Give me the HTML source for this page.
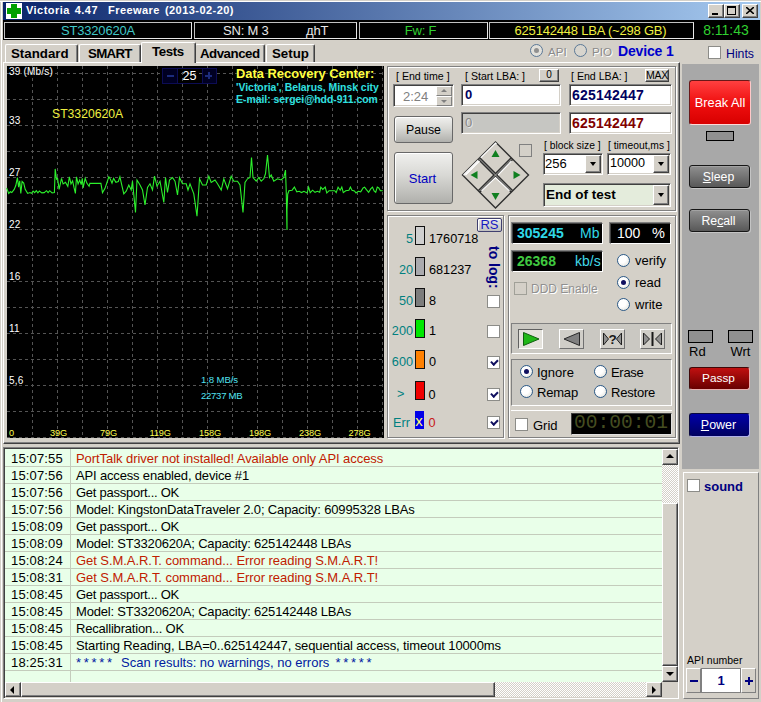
<!DOCTYPE html>
<html><head><meta charset="utf-8"><title>Victoria 4.47</title>
<style>
html,body{margin:0;padding:0}
body{width:761px;height:702px;overflow:hidden;position:relative;background:#d4d0c8;font-family:"Liberation Sans",sans-serif;font-size:13px;color:#000}
div,span{position:absolute;box-sizing:border-box;white-space:pre;line-height:1}
.t{line-height:1}
.sunk{border:1px solid;border-color:#808080 #fff #fff #808080;box-shadow:inset 1px 1px 0 #404040, inset -1px -1px 0 #d4d0c8}
.btn{background:#d4d0c8;border:1px solid;border-color:#fff #404040 #404040 #fff;box-shadow:inset -1px -1px 0 #808080, inset 1px 1px 0 #d4d0c8;text-align:center}
.sp{background:#000;border:1px solid;border-color:#c0c0c0 #e8e8e8 #e8e8e8 #c0c0c0;text-align:center;font-size:13px;letter-spacing:-.2px}
.grp{border:1px solid;border-color:#808080 #fff #fff #808080;box-shadow:inset 1px 1px 0 #fff, 1px 1px 0 #fff inset}
.etch{border:1px solid #808080;box-shadow:1px 1px 0 #fff, inset 1px 1px 0 #fff}
.radio{width:13px;height:13px;border-radius:50%;border:1px solid #2c5a88;background:radial-gradient(circle at 35% 35%,#fff 0,#fff 40%,#dcdcd4 100%)}
.radio.on::after{content:"";position:absolute;left:3px;top:3px;width:5px;height:5px;border-radius:50%;background:#101060}
.chk{width:13px;height:13px;border:1px solid #8c8c88;background:#fff}
.lab{font-size:10.6px}
.lcd{background:#000;border:1px solid;border-color:#404040 #fff #fff #404040;box-shadow:-1px -1px 0 #808080}
</style></head><body>
<!-- window frame -->
<div style="left:0;top:1px;width:761px;height:1px;background:#fff"></div>
<div style="left:1px;top:1px;width:1px;height:701px;background:#fff"></div>
<!-- title bar -->
<div style="left:3px;top:2px;width:757px;height:18px;background:linear-gradient(90deg,#0a246a 0%,#a6caf0 100%)"></div>
<div style="left:6px;top:3px;width:16px;height:16px;background:#fff"></div>
<div style="left:11px;top:4px;width:6px;height:14px;background:#00a000"></div>
<div style="left:7px;top:8px;width:14px;height:6px;background:#00a000"></div>
<div class="t" style="left:26px;top:5px;color:#fff;font-weight:bold;font-size:11px;letter-spacing:.45px;word-spacing:1.5px">Victoria 4.47  Freeware (2013-02-20)</div>
<div class="btn" style="left:708px;top:4px;width:16px;height:14px"><div style="left:3px;top:8px;width:6px;height:2px;background:#000"></div></div>
<div class="btn" style="left:724px;top:4px;width:16px;height:14px"><div style="left:2px;top:1px;width:9px;height:9px;border:1px solid #000;border-top-width:2px"></div></div>
<div class="btn" style="left:742px;top:4px;width:16px;height:14px"><svg style="position:absolute;left:3px;top:2px" width="8" height="7"><path d="M0 0L8 7M8 0L0 7" stroke="#000" stroke-width="1.6"/></svg></div>
<!-- status panels -->
<div style="left:3px;top:20px;width:757px;height:20px;background:#000"></div>
<div class="sp" style="left:4px;top:22px;width:188px;height:17px;color:#40c8c8"><span class="t" style="left:0;width:100%;top:1px">ST3320620A</span></div>
<div class="sp" style="left:194px;top:22px;width:163px;height:17px;color:#e8e8e8"><span class="t" style="left:28px;top:1px">SN: M 3</span><span class="t" style="left:111px;top:1px">дhT</span></div>
<div class="sp" style="left:359px;top:22px;width:129px;height:17px;color:#30d030"><span class="t" style="left:-3px;width:100%;top:1px">Fw: F</span></div>
<div class="sp" style="left:489px;top:22px;width:205px;height:17px;color:#f0f040"><span class="t" style="left:-1px;width:100%;top:1px">625142448 LBA (~298 GB)</span></div>
<div class="sp" style="left:694px;top:22px;width:66px;height:17px;border-color:#000;color:#30d030"><span class="t" style="left:-1px;width:100%;top:0px;font-size:14px;letter-spacing:0">8:11:43</span></div>
<!-- tabs -->
<div id="tabs">
<div class="tab" style="left:5px;top:44px;width:73px;height:19px"><span class="t" style="left:5px;top:2px">Standard</span></div>
<div class="tab" style="left:79px;top:44px;width:62px;height:19px"><span class="t" style="left:8px;top:2px;letter-spacing:-.7px">SMART</span></div>
<div class="tab" style="left:195px;top:44px;width:70px;height:19px"><span class="t" style="left:4px;top:2px;letter-spacing:-.5px">Advanced</span></div>
<div class="tab" style="left:266px;top:44px;width:49px;height:19px"><span class="t" style="left:5px;top:2px">Setup</span></div>
</div>
<style>
.tab{border:1px solid;border-color:#fff #404040 transparent #fff;border-bottom:0;box-shadow:inset -1px 0 0 #808080;font-weight:bold;font-size:13.3px;border-radius:2px 2px 0 0}
</style>
<!-- tab page -->
<div style="left:3px;top:62px;width:677px;height:382px;border:1px solid;border-color:#fff #404040 #404040 #fff;box-shadow:inset -1px -1px 0 #808080"></div>
<div class="tab" style="left:141px;top:42px;width:55px;height:21px;background:#d4d0c8"><span class="t" style="left:10px;top:2px;letter-spacing:-.4px">Tests</span></div>
<!-- right of tabs -->
<div class="radio" style="left:530px;top:44px;border-color:#5a7896;background:#e2e0da"><div style="left:3px;top:3px;width:5px;height:5px;border-radius:50%;background:#909090"></div></div>
<div class="t" style="left:548px;top:46px;color:#8a8a8a;text-shadow:1px 1px 0 #fff;font-size:11.6px">API</div>
<div class="radio" style="left:574px;top:44px;border-color:#5a7896;background:#d8d5ce"></div>
<div class="t" style="left:592px;top:46px;color:#8a8a8a;text-shadow:1px 1px 0 #fff;font-size:11.6px">PIO</div>
<div class="t" style="left:618px;top:44px;color:#0000cc;font-weight:bold;font-size:14px;letter-spacing:-.15px">Device 1</div>
<div class="chk" style="left:708px;top:46px"></div>
<div class="t" style="left:726px;top:48px;color:#000080;font-size:12.3px">Hints</div>
<!-- chart -->
<div style="left:7px;top:66px;width:377px;height:372px;background:#000"></div>
<svg style="position:absolute;left:0;top:0" width="761" height="702" viewBox="0 0 761 702">
<g stroke="#545454" stroke-width="1" stroke-dasharray="3 3" shape-rendering="crispEdges">
<line x1="32.5" y1="66" x2="32.5" y2="438"/>
<line x1="57.5" y1="66" x2="57.5" y2="438"/>
<line x1="82.5" y1="66" x2="82.5" y2="438"/>
<line x1="107.5" y1="66" x2="107.5" y2="438"/>
<line x1="132.5" y1="66" x2="132.5" y2="438"/>
<line x1="157.5" y1="66" x2="157.5" y2="438"/>
<line x1="182.5" y1="66" x2="182.5" y2="438"/>
<line x1="207.5" y1="66" x2="207.5" y2="438"/>
<line x1="232.5" y1="66" x2="232.5" y2="438"/>
<line x1="257.5" y1="66" x2="257.5" y2="438"/>
<line x1="282.5" y1="66" x2="282.5" y2="438"/>
<line x1="307.5" y1="66" x2="307.5" y2="438"/>
<line x1="332.5" y1="66" x2="332.5" y2="438"/>
<line x1="357.5" y1="66" x2="357.5" y2="438"/>
<line x1="382.5" y1="66" x2="382.5" y2="438"/>
<line x1="7" y1="73.5" x2="384" y2="73.5"/>
<line x1="7" y1="99.5" x2="384" y2="99.5"/>
<line x1="7" y1="125.5" x2="384" y2="125.5"/>
<line x1="7" y1="151.5" x2="384" y2="151.5"/>
<line x1="7" y1="177.5" x2="384" y2="177.5"/>
<line x1="7" y1="203.5" x2="384" y2="203.5"/>
<line x1="7" y1="229.5" x2="384" y2="229.5"/>
<line x1="7" y1="255.5" x2="384" y2="255.5"/>
<line x1="7" y1="281.5" x2="384" y2="281.5"/>
<line x1="7" y1="307.5" x2="384" y2="307.5"/>
<line x1="7" y1="333.5" x2="384" y2="333.5"/>
<line x1="7" y1="359.5" x2="384" y2="359.5"/>
<line x1="7" y1="385.5" x2="384" y2="385.5"/>
<line x1="7" y1="411.5" x2="384" y2="411.5"/>
<line x1="7" y1="437.5" x2="384" y2="437.5"/>
</g>
<polyline fill="none" stroke="#2cf02c" stroke-width="1.1" points="6.6,187.9 8.7,193.4 10.3,191.8 11.8,192.6 14.2,189.4 15.8,185.5 17.4,177.6 18.6,187.1 19.7,180.8 20.8,193.4 22.1,181.5 23.7,183.1 25.2,189.4 27.6,193.4 30.0,192.6 31.5,193.4 33.1,191.0 34.7,192.6 36.3,190.7 37.9,192.9 39.4,191.0 41.8,192.9 44.2,192.6 46.5,190.7 48.1,192.6 49.7,190.7 52.1,192.9 54.4,192.6 55.2,168.9 56.5,179.2 57.6,178.4 59.1,189.4 61.5,178.4 63.1,183.9 65.5,182.3 67.8,186.3 69.4,176.8 71.0,183.9 72.6,180.8 74.1,187.9 75.4,193.4 76.5,176.8 78.1,183.9 79.7,180.0 81.2,184.7 82.3,178.4 83.1,187.9 85.2,178.4 86.8,183.1 89.1,186.3 89.9,183.4 100.9,183.4 102.5,192.6 104.9,188.6 107.3,181.5 108.8,176.8 110.4,179.2 112.0,183.1 113.6,178.4 115.9,182.3 118.3,181.5 119.9,176.8 123.8,193.8 126.2,191.2 128.8,185.0 131.2,190.0 132.5,181.2 135.5,212.5 137.0,180.0 140.0,185.0 142.5,190.0 145.0,205.0 147.5,187.5 150.0,183.8 152.5,190.0 154.5,176.2 157.0,186.2 160.0,181.2 163.8,202.5 165.5,177.5 167.5,192.5 169.5,180.0 172.5,177.5 175.0,181.2 177.5,195.0 179.5,177.5 182.5,183.8 186.2,183.8 188.0,190.0 190.0,183.8 193.8,193.8 197.0,216.2 199.5,178.8 202.5,185.0 206.2,185.0 208.8,176.2 211.2,182.5 215.0,180.0 217.5,183.8 221.2,190.0 223.8,178.8 227.5,188.8 231.2,176.2 233.8,181.2 237.5,181.2 240.0,185.0 243.0,212.5 245.0,182.5 247.5,178.8 250.0,177.5 251.5,157.5 253.0,177.5 256.2,181.2 258.8,177.5 261.2,181.2 263.8,178.8 265.5,173.8 267.5,155.0 269.5,177.5 271.2,175.0 273.8,181.2 277.5,178.8 281.2,180.0 283.8,177.5 285.5,170.0 286.2,190.0 287.0,230.0 287.0,209.9 287.7,194.2 288.9,190.7 292.1,190.2 294.4,187.1 296.8,191.8 299.2,191.3 301.5,192.6 303.9,191.3 307.1,192.9 308.6,187.1 310.2,192.6 312.6,190.2 315.0,192.3 317.3,191.3 319.7,192.3 320.8,187.1 322.8,189.4 325.2,187.1 326.8,192.9 329.1,190.7 334.7,190.7 336.2,192.6 338.1,187.1 340.2,190.2 341.8,187.1 343.3,192.6 345.7,190.7 348.9,190.2 350.4,187.1 352.0,190.2 354.4,191.0 356.0,192.9 358.3,191.3 360.7,191.8 363.1,187.9 364.6,187.1 366.2,189.4 368.6,192.3 370.9,188.6 372.5,187.1 374.1,191.0 375.7,192.3 377.3,187.1 378.8,187.9 380.4,190.7 382.8,190.7"/>
</svg>
<div id="charttext" style="left:0;top:0;color:#fff;font-size:10px;letter-spacing:.2px">
<div class="t" style="left:9px;top:67px">39 (Mb/s)</div>
<div class="t" style="left:9px;top:116px">33</div>
<div class="t" style="left:9px;top:168px">27</div>
<div class="t" style="left:9px;top:220px">22</div>
<div class="t" style="left:9px;top:272px">16</div>
<div class="t" style="left:9px;top:324px">11</div>
<div class="t" style="left:9px;top:376px">5,6</div>
<div class="t" style="left:9px;top:429px;color:#ffff50;letter-spacing:-.15px;font-size:9.2px">0</div>
<div class="t" style="left:50px;top:429px;color:#ffff50;letter-spacing:-.15px;font-size:9.2px">39G</div>
<div class="t" style="left:100px;top:429px;color:#ffff50;letter-spacing:-.15px;font-size:9.2px">79G</div>
<div class="t" style="left:149.5px;top:429px;color:#ffff50;letter-spacing:-.15px;font-size:9.2px">119G</div>
<div class="t" style="left:199px;top:429px;color:#ffff50;letter-spacing:-.15px;font-size:9.2px">158G</div>
<div class="t" style="left:249px;top:429px;color:#ffff50;letter-spacing:-.15px;font-size:9.2px">198G</div>
<div class="t" style="left:299px;top:429px;color:#ffff50;letter-spacing:-.15px;font-size:9.2px">238G</div>
<div class="t" style="left:348.5px;top:429px;color:#ffff50;letter-spacing:-.15px;font-size:9.2px">278G</div>
<div class="t" style="left:52px;top:108px;color:#f0f040;font-size:12.2px;letter-spacing:0">ST3320620A</div>
<div class="t" style="left:201px;top:375px;color:#50e0f0;font-size:9.6px;letter-spacing:-.1px">1,8 MB/s</div>
<div class="t" style="left:201px;top:391px;color:#50e0f0;font-size:9.6px;letter-spacing:-.3px">22737 MB</div>
<div class="t" style="left:236px;top:68px;color:#ffff40;font-weight:bold;font-size:12.9px;letter-spacing:0">Data Recovery Center:</div>
<div class="t" style="left:236px;top:83px;color:#30e0e0;font-weight:bold;font-size:10.4px;letter-spacing:0">'Victoria', Belarus, Minsk city</div>
<div class="t" style="left:236px;top:95px;color:#30e0e0;font-weight:bold;font-size:10.4px;letter-spacing:0">E-mail: sergei@hdd-911.com</div>
</div>
<!-- zoom widget -->
<div style="left:162px;top:68px;width:55px;height:16px;border:1px solid #0c0c54"></div>
<div style="left:163px;top:69px;width:15px;height:14px;background:#000022;border-right:1px solid #0c0c54"></div>
<div style="left:202px;top:69px;width:14px;height:14px;background:#000022;border-left:1px solid #0c0c54"></div>
<div style="left:167px;top:75px;width:7px;height:2px;background:#1c2c7c"></div>
<div style="left:205px;top:75px;width:7px;height:2px;background:#1c2c7c"></div>
<div style="left:208px;top:72px;width:2px;height:7px;background:#1c2c7c"></div>
<div class="t" style="left:182.5px;top:70px;color:#fff;font-size:12.6px;letter-spacing:0">25</div>
<!-- group 1 : controls -->
<div class="etch" style="left:387px;top:66px;width:289px;height:145px"></div>
<div class="t lab" style="left:396px;top:71px">[ End time ]</div>
<div class="sunk" style="left:393px;top:84px;width:61px;height:23px;background:#fff"><span class="t" style="left:9px;top:5px;color:#808080;font-size:13px">2:24</span>
<div class="btn" style="left:42px;top:1px;width:16px;height:10px;box-shadow:none;border-color:#fff #808080 #808080 #fff"><div style="left:4px;top:2px;border:3px solid transparent;border-top:0;border-bottom:3px solid #808080"></div></div>
<div class="btn" style="left:42px;top:11px;width:16px;height:10px;box-shadow:none;border-color:#fff #808080 #808080 #fff"><div style="left:4px;top:3px;border:3px solid transparent;border-bottom:0;border-top:3px solid #808080"></div></div>
</div>
<div class="t lab" style="left:465px;top:71px">[ Start LBA: ]</div>
<div class="btn" style="left:539px;top:69px;width:20px;height:13px;font-size:10px"><span class="t" style="left:0;width:100%;top:0">0</span></div>
<div class="sunk" style="left:461px;top:84px;width:100px;height:22px;background:#fff"><span class="t" style="left:3px;top:3px;color:#000060;font-weight:bold;font-size:13px">0</span></div>
<div class="t lab" style="left:571px;top:71px">[ End LBA: ]</div>
<div class="btn" style="left:645px;top:69px;width:24px;height:13px;font-size:10.5px;letter-spacing:-.3px"><span class="t" style="left:0;width:100%;top:0">MAX</span></div>
<div class="sunk" style="left:569px;top:84px;width:103px;height:22px;background:#fff"><span class="t" style="left:2px;top:3px;color:#000060;font-weight:bold;font-size:14px;letter-spacing:.2px">625142447</span></div>
<div class="b2" style="left:394px;top:116px;width:59px;height:27px"><span class="t" style="left:0;width:100%;top:7px;font-size:12.3px">Pause</span></div>
<div class="sunk" style="left:461px;top:112px;width:100px;height:22px;background:#c6c6c2"><span class="t" style="left:3px;top:3px;color:#888;font-size:13px;text-shadow:1px 1px 0 #e8e8e8">0</span></div>
<div class="sunk" style="left:569px;top:112px;width:103px;height:22px;background:#fff"><span class="t" style="left:2px;top:3px;color:#800000;font-weight:bold;font-size:14px;letter-spacing:.2px">625142447</span></div>
<div class="b2" style="left:394px;top:152px;width:59px;height:52px"><span class="t" style="left:-1px;width:100%;top:19px;font-size:13px;color:#0000c0">Start</span></div>
<style>.b2{text-align:center;border:1px solid #686868;border-radius:3px;background:linear-gradient(#f0f0ee,#d8d8d4 45%,#b0b0ac);box-shadow:inset 1px 1px 0 #fff}</style>
<!-- diamond -->
<svg style="position:absolute;left:460px;top:140px" width="72" height="72" viewBox="0 0 72 72">
<g transform="translate(35.5,35)">
<path d="M0 -33L33 0L0 33L-33 0Z" fill="#d4d0c8" stroke="#303030" stroke-width="1.4"/>
<path d="M-32 0L0 -32L1 -31" fill="none" stroke="#fff" stroke-width="1.2"/>
<path d="M-16.5 -16.5L16.5 16.5M16.5 -16.5L-16.5 16.5" stroke="#303030" stroke-width="3.6"/>
<path d="M-16 -16L16 16M16 -16L-16 16" stroke="#a8a8a4" stroke-width="1"/>
<path d="M-14 16L0 2.5L14 16 M2.5 0L16 -14 M-30 0 L-16 -14" fill="none" stroke="#fff" stroke-width="1.2" transform="translate(0,0)"/>
<path d="M0 -25L4 -18L-4 -18Z" fill="#108020"/>
<path d="M0 25L4 18L-4 18Z" fill="#108020"/>
<path d="M-25 0L-18 -4L-18 4Z" fill="#108020"/>
<path d="M25 0L18 -4L18 4Z" fill="#108020"/>
</g></svg>
<div style="left:519px;top:144px;width:13px;height:13px;border:1px solid #808080;background:#d4d0c8"></div>
<div class="t lab" style="left:544px;top:141px;font-size:10.3px">[ block size ]</div>
<div class="t lab" style="left:608px;top:141px;font-size:10.3px">[ timeout,ms ]</div>
<div class="sunk" style="left:543px;top:153px;width:60px;height:22px;background:#fff"><span class="t" style="left:1px;top:3px;font-size:13px">256</span>
<div class="btn" style="left:41px;top:1px;width:16px;height:18px"><div style="left:4px;top:6px;border:3px solid transparent;border-bottom:0;border-top:4px solid #000"></div></div></div>
<div class="sunk" style="left:607px;top:153px;width:64px;height:22px;background:#fff"><span class="t" style="left:2px;top:3px;font-size:12.6px">10000</span>
<div class="btn" style="left:45px;top:1px;width:16px;height:18px"><div style="left:4px;top:6px;border:3px solid transparent;border-bottom:0;border-top:4px solid #000"></div></div></div>
<div class="sunk" style="left:543px;top:183px;width:128px;height:24px;background:#e4ecdc"><span class="t" style="left:2px;top:4px;font-size:13.5px;font-weight:bold">End of test</span>
<div class="btn" style="left:109px;top:1px;width:16px;height:20px"><div style="left:4px;top:7px;border:3px solid transparent;border-bottom:0;border-top:4px solid #000"></div></div></div>
<!-- group 2 : legend -->
<div class="etch" style="left:387px;top:215px;width:117px;height:223px"></div>
<div style="left:477px;top:218px;width:25px;height:14px;border:1px solid #404070;border-radius:2px;background:linear-gradient(#e8e8e8,#c0c0c0);box-shadow:inset 1px 1px 0 #fff;text-align:center"><span class="t" style="left:0;width:100%;top:-1px;font-size:13px;color:#1818c0">RS</span></div>
<div id="legend" style="left:0;top:0;font-size:12.7px">
<div class="t" style="left:380px;width:33px;text-align:right;top:233px;color:#008080">5</div>
<div class="t" style="left:380px;width:33px;text-align:right;top:264px;color:#008080">20</div>
<div class="t" style="left:380px;width:33px;text-align:right;top:295px;color:#008080">50</div>
<div class="t" style="left:380px;width:33px;text-align:right;top:325px;color:#008080">200</div>
<div class="t" style="left:380px;width:33px;text-align:right;top:356px;color:#008080">600</div>
<div class="t" style="left:380px;width:24.5px;text-align:right;top:388px;color:#008080">&gt;</div>
<div class="t" style="left:380px;width:30px;text-align:right;top:417px;color:#008080">Err</div>
<div style="left:415px;top:226px;width:10px;height:19px;background:#d0d0d0;border:1px solid #101010"></div>
<div style="left:415px;top:257px;width:10px;height:19px;background:#aaaaae;border:1px solid #101010"></div>
<div style="left:415px;top:288px;width:10px;height:19px;background:#7c7c7c;border:1px solid #101010"></div>
<div style="left:415px;top:319px;width:10px;height:19px;background:#00e800;border:1px solid #101010"></div>
<div style="left:415px;top:350px;width:10px;height:19px;background:#ff8000;border:1px solid #101010"></div>
<div style="left:415px;top:381px;width:10px;height:19px;background:#f00000;border:1px solid #101010"></div>
<div style="left:415px;top:411px;width:9px;height:18px;background:#0000e8"></div>
<div class="t" style="left:413.5px;top:413px;width:11px;text-align:center;color:#ffff70;font-size:15px">x</div>
<div class="t" style="left:429px;top:233px">1760718</div>
<div class="t" style="left:429px;top:264px">681237</div>
<div class="t" style="left:429px;top:295px">8</div>
<div class="t" style="left:429px;top:325px">1</div>
<div class="t" style="left:429px;top:356px">0</div>
<div class="t" style="left:428.5px;top:389px">0</div>
<div class="t" style="left:428.5px;top:416.5px;color:#c81818">0</div>
</div>
<div class="t" style="left:501px;top:246px;transform-origin:0 0;transform:rotate(90deg);font-weight:bold;color:#000080;font-size:14px">to log:</div>
<div class="chk" style="left:487px;top:295px"></div>
<div class="chk" style="left:487px;top:325px"></div>
<div class="chk on" style="left:487px;top:356px"></div>
<div class="chk on" style="left:487px;top:388px"></div>
<div class="chk on" style="left:487px;top:416px"></div>
<style>.chk.on::after{content:"";position:absolute;left:3.6px;top:0.6px;width:2.6px;height:5px;border:solid #101060;border-width:0 2.2px 2.2px 0;transform:rotate(45deg)}</style>
<!-- group 3 -->
<div class="etch" style="left:508px;top:215px;width:168px;height:223px"></div>
<div class="lcd" style="left:512px;top:223px;width:91px;height:21px"><span class="t" style="left:4px;top:2px;color:#30d8e8;font-weight:bold;font-size:14px">305245</span><span class="t" style="left:67px;top:2px;color:#30d8e8;font-size:14px">Mb</span></div>
<div class="lcd" style="left:610px;top:223px;width:61px;height:21px"><span class="t" style="left:6px;top:2px;color:#fff;font-size:14px">100</span><span class="t" style="left:41px;top:2px;color:#fff;font-size:14.5px">%</span></div>
<div class="lcd" style="left:512px;top:251px;width:91px;height:21px"><span class="t" style="left:4px;top:2px;color:#40c840;font-weight:bold;font-size:14px">26368</span><span class="t" style="left:62px;top:2px;color:#40d8e8;font-size:14px">kb/s</span></div>
<div class="radio" style="left:617px;top:254px"></div><div class="t" style="left:635px;top:254px">verify</div>
<div class="radio on" style="left:617px;top:276px"></div><div class="t" style="left:635px;top:276px">read</div>
<div class="radio" style="left:617px;top:298px"></div><div class="t" style="left:635px;top:298px">write</div>
<div style="left:514px;top:282px;width:13px;height:13px;border:1px solid #a0a098;background:#d4d0c8"></div>
<div class="t" style="left:531px;top:283px;color:#909090;text-shadow:1px 1px 0 #fff;font-size:12px">DDD Enable</div>
<!-- playback panel -->
<div class="pn" style="left:511px;top:323px;width:161px;height:31px"></div>
<style>.pn{border:1px solid;border-color:#808080 #fff #fff #808080;background:#cac8c2}</style>
<div style="left:518px;top:329px;width:25px;height:20px;border:1px solid;border-color:#606060 #fff #fff #606060;background:#e4e2dc"><svg width="23" height="18" style="position:absolute;left:0;top:0"><path d="M4.5 2.5L20 9L4.5 15.5Z" fill="#20b818" stroke="#106010"/></svg></div>
<div class="pb" style="left:559px;top:329px;width:25px;height:20px"><svg width="23" height="18" style="position:absolute;left:0;top:0"><path d="M19.5 2.5L4 9L19.5 15.5Z" fill="#808080" stroke="#282828"/></svg></div>
<div class="pb" style="left:600px;top:329px;width:25px;height:20px"><svg width="23" height="18" style="position:absolute;left:0;top:0"><path d="M2.5 3L7.5 9L2.5 15Z M20.5 3L15.5 9L20.5 15Z" fill="#909090" stroke="#202020"/><text x="7.6" y="14" font-size="13.5" font-weight="bold" font-family="Liberation Sans, sans-serif" fill="#181818">?</text></svg></div>
<div class="pb" style="left:640px;top:329px;width:25px;height:20px"><svg width="23" height="18" style="position:absolute;left:0;top:0"><path d="M2.5 3L8.5 9L2.5 15Z M20.5 3L14.5 9L20.5 15Z" fill="#909090" stroke="#202020"/><path d="M11.5 2V16" stroke="#181818" stroke-width="2"/></svg></div>
<style>.pb{border:1px solid;border-color:#fff #707070 #707070 #fff;background:#d0cec8}</style>
<!-- options panel -->
<div class="pn" style="left:511px;top:359px;width:161px;height:47px"></div>
<div class="radio on" style="left:520px;top:365px"></div><div class="t" style="left:537px;top:366px">Ignore</div>
<div class="radio" style="left:594px;top:365px"></div><div class="t" style="left:611px;top:366px;letter-spacing:-.3px">Erase</div>
<div class="radio" style="left:520px;top:385px"></div><div class="t" style="left:537px;top:386px;letter-spacing:-.2px">Remap</div>
<div class="radio" style="left:594px;top:385px"></div><div class="t" style="left:611px;top:386px;letter-spacing:-.2px">Restore</div>
<!-- grid panel -->
<div style="left:511px;top:410px;width:161px;height:1px;background:#fff"></div>
<div class="chk" style="left:515px;top:418px"></div><div class="t" style="left:533px;top:419px">Grid</div>
<div style="left:571px;top:413px;width:101px;height:22px;background:#000;border:1px solid;border-color:#404040 #e0e0e0 #e0e0e0 #404040"><span class="t" style="left:2px;top:0px;color:#454d20;font-size:19.6px;font-family:'Liberation Mono',monospace">00:00:01</span></div>
<!-- right panel -->
<div style="left:682px;top:64px;width:77px;height:405px;background:#a8a8a8"></div>
<div style="left:689px;top:80px;width:62px;height:45px;border-radius:3px;border:1px solid;border-color:#6a1818 #ffc8c8 #ffd8d8 #6a1818;background:linear-gradient(#ff4040,#f01010 50%,#d80000)"><span class="t" style="left:0;width:100%;text-align:center;top:16px;color:#fff;font-size:12.8px">Break All</span></div>
<div style="left:706px;top:131px;width:28px;height:10px;background:#909090;border:1px solid #000"></div>
<div class="gb" style="left:689px;top:165px;width:61px;height:23px"><span class="t" style="left:-1px;width:100%;text-align:center;top:5px"><u>S</u>leep</span></div>
<div class="gb" style="left:689px;top:209px;width:61px;height:23px"><span class="t" style="left:-1px;width:100%;text-align:center;top:5px">Re<u>c</u>all</span></div>
<style>.gb{border-radius:3px;border:1px solid #161616;box-shadow:1px 1px 0 #c4c4c4, inset 0 1px 0 rgba(255,255,255,.18);background:linear-gradient(#909090,#585858);color:#fff;font-size:12.3px}</style>
<div style="left:688px;top:330px;width:25px;height:13px;background:#909090;border:1px solid #000"></div>
<div style="left:728px;top:330px;width:25px;height:13px;background:#909090;border:1px solid #000"></div>
<div class="t" style="left:689px;top:345px;font-size:13px">Rd</div>
<div class="t" style="left:730.5px;top:345px;font-size:13px">Wrt</div>
<div class="gb" style="left:689px;top:367px;width:61px;height:23px;border-color:#400808 #e8b0b0 #e8b0b0 #400808;box-shadow:none;background:linear-gradient(#c01010,#680000)"><span class="t" style="left:-1px;width:100%;text-align:center;top:5px;font-size:11.8px">Passp</span></div>
<div class="gb" style="left:689px;top:413px;width:61px;height:24px;border-color:#080840 #b0b0e8 #b0b0e8 #080840;box-shadow:none;background:linear-gradient(#0000a8,#000060)"><span class="t" style="left:-1px;width:100%;text-align:center;top:5px;font-size:12.5px"><u>P</u>ower</span></div>
<!-- log -->
<div class="sunk" style="left:3px;top:447px;width:676px;height:252px;background:#e9ffe9"></div>
<div id="log" style="left:5px;top:449px;width:657px;height:233px;font-size:13px;overflow:hidden;background:repeating-linear-gradient(#e9ffe9 0,#e9ffe9 16px,#c4ccbc 16px,#c4ccbc 17px);background-position:0 1px">
<div style="left:65px;top:0;width:1px;height:233px;background:#c4ccbc"></div>
<div class="t" style="left:6px;top:3px;letter-spacing:.15px">15:07:55</div><div class="t" style="left:71px;top:3px;color:#c02000;letter-spacing:-0.058px">PortTalk driver not installed! Available only API access</div>
<div class="t" style="left:6px;top:20px;letter-spacing:.15px">15:07:56</div><div class="t" style="left:71px;top:20px;letter-spacing:-0.166px">API access enabled, device #1</div>
<div class="t" style="left:6px;top:37px;letter-spacing:.15px">15:07:56</div><div class="t" style="left:71px;top:37px;letter-spacing:-0.26px">Get passport... OK</div>
<div class="t" style="left:6px;top:54px;letter-spacing:.15px">15:07:56</div><div class="t" style="left:71px;top:54px;letter-spacing:-0.15px">Model: KingstonDataTraveler 2.0; Capacity: 60995328 LBAs</div>
<div class="t" style="left:6px;top:71px;letter-spacing:.15px">15:08:09</div><div class="t" style="left:71px;top:71px;letter-spacing:-0.26px">Get passport... OK</div>
<div class="t" style="left:6px;top:88px;letter-spacing:.15px">15:08:09</div><div class="t" style="left:71px;top:88px;letter-spacing:-0.19px">Model: ST3320620A; Capacity: 625142448 LBAs</div>
<div class="t" style="left:6px;top:105px;letter-spacing:.15px">15:08:24</div><div class="t" style="left:71px;top:105px;color:#c02000;letter-spacing:-0.054px">Get S.M.A.R.T. command... Error reading S.M.A.R.T!</div>
<div class="t" style="left:6px;top:122px;letter-spacing:.15px">15:08:31</div><div class="t" style="left:71px;top:122px;color:#c02000;letter-spacing:-0.054px">Get S.M.A.R.T. command... Error reading S.M.A.R.T!</div>
<div class="t" style="left:6px;top:139px;letter-spacing:.15px">15:08:45</div><div class="t" style="left:71px;top:139px;letter-spacing:-0.26px">Get passport... OK</div>
<div class="t" style="left:6px;top:156px;letter-spacing:.15px">15:08:45</div><div class="t" style="left:71px;top:156px;letter-spacing:-0.19px">Model: ST3320620A; Capacity: 625142448 LBAs</div>
<div class="t" style="left:6px;top:173px;letter-spacing:.15px">15:08:45</div><div class="t" style="left:71px;top:173px;letter-spacing:-0.2px">Recallibration... OK</div>
<div class="t" style="left:6px;top:190px;letter-spacing:.15px">15:08:45</div><div class="t" style="left:71px;top:190px;letter-spacing:-0.119px">Starting Reading, LBA=0..625142447, sequential access, timeout 10000ms</div>
<div class="t" style="left:6px;top:207px;letter-spacing:.15px">18:25:31</div><div class="t" style="left:71px;top:207px;color:#0020a0"><span style="position:static;letter-spacing:2.7px">***** </span>Scan results: no warnings, no errors<span style="position:static;letter-spacing:2.7px"> *****</span></div>
</div>
<!-- scrollbars -->
<div style="left:662px;top:449px;width:16px;height:233px;background:repeating-conic-gradient(#fff 0 25%,#d4d0c8 0 50%) 0 0/2px 2px"></div>
<div class="btn" style="left:662px;top:449px;width:16px;height:16px"><div style="left:3px;top:4px;border:4px solid transparent;border-top:0;border-bottom:4px solid #000"></div></div>
<div class="btn" style="left:662px;top:503px;width:16px;height:163px"></div>
<div class="btn" style="left:662px;top:666px;width:16px;height:16px"><div style="left:3px;top:5px;border:4px solid transparent;border-bottom:0;border-top:4px solid #000"></div></div>
<div style="left:5px;top:682px;width:657px;height:15px;background:repeating-conic-gradient(#fff 0 25%,#d4d0c8 0 50%) 0 0/2px 2px"></div>
<div class="btn" style="left:5px;top:682px;width:16px;height:15px"><div style="left:4px;top:3px;border:4px solid transparent;border-left:0;border-right:4px solid #000"></div></div>
<div class="btn" style="left:21px;top:682px;width:474px;height:15px"></div>
<div class="btn" style="left:646px;top:682px;width:16px;height:15px"><div style="left:5px;top:3px;border:4px solid transparent;border-right:0;border-left:4px solid #000"></div></div>
<div style="left:662px;top:682px;width:16px;height:15px;background:#d4d0c8"></div>
<!-- bottom right panel -->
<div style="left:683px;top:472px;width:76px;height:227px;border:1px solid;border-color:#fff #808080 #808080 #fff"></div>
<div class="chk" style="left:687px;top:479px"></div>
<div class="t" style="left:704px;top:480px;font-weight:bold;color:#000080;font-size:13px">sound</div>
<div class="t" style="left:687px;top:655px;font-size:10.5px">API number</div>
<div class="btn" style="left:686px;top:668px;width:15px;height:25px;box-shadow:none;border-color:#fff #808080 #808080 #fff"><div style="left:3px;top:11px;width:8px;height:2px;background:#000080"></div></div>
<div style="left:701px;top:668px;width:40px;height:25px;background:#fff;border:1px solid #808080"><span class="t" style="left:0;width:100%;text-align:center;top:5px;font-weight:bold;color:#000080;font-size:13px">1</span></div>
<div class="btn" style="left:741px;top:668px;width:15px;height:25px;box-shadow:none;border-color:#fff #808080 #808080 #fff"><div style="left:3px;top:11px;width:8px;height:2px;background:#000080"></div><div style="left:6px;top:8px;width:2px;height:8px;background:#000080"></div></div>

</body></html>
